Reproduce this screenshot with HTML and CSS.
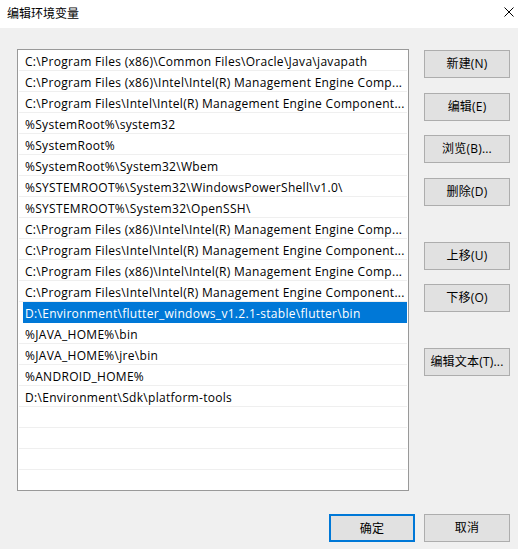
FILE: index.html
```html
<!DOCTYPE html>
<html lang="zh-CN">
<head>
<meta charset="utf-8">
<title>编辑环境变量</title>
<link rel="stylesheet" href="styles.css">
</head>
<body>
<div class="dialog">
  <div class="titlebar">
    <span class="title">编辑环境变量</span>
    <svg class="close" width="10" height="10" viewBox="0 0 10 10"><path d="M0.5 0.5 L9.5 9.5 M9.5 0.5 L0.5 9.5" stroke="#000" stroke-width="1" fill="none"/></svg>
  </div>
  <div class="content">
    <div class="main">
      <div class="list">
        <div class="row">C:\Program Files (x86)\Common Files\Oracle\Java\javapath</div>
        <div class="row">C:\Program Files (x86)\Intel\Intel(R) Management Engine Comp...</div>
        <div class="row">C:\Program Files\Intel\Intel(R) Management Engine Component...</div>
        <div class="row">%SystemRoot%\system32</div>
        <div class="row">%SystemRoot%</div>
        <div class="row">%SystemRoot%\System32\Wbem</div>
        <div class="row">%SYSTEMROOT%\System32\WindowsPowerShell\v1.0\</div>
        <div class="row">%SYSTEMROOT%\System32\OpenSSH\</div>
        <div class="row">C:\Program Files (x86)\Intel\Intel(R) Management Engine Comp...</div>
        <div class="row">C:\Program Files\Intel\Intel(R) Management Engine Component...</div>
        <div class="row">C:\Program Files (x86)\Intel\Intel(R) Management Engine Comp...</div>
        <div class="row">C:\Program Files\Intel\Intel(R) Management Engine Component...</div>
        <div class="row sel">D:\Environment\flutter_windows_v1.2.1-stable\flutter\bin</div>
        <div class="row">%JAVA_HOME%\bin</div>
        <div class="row">%JAVA_HOME%\jre\bin</div>
        <div class="row">%ANDROID_HOME%</div>
        <div class="row">D:\Environment\Sdk\platform-tools</div>
        <div class="row"></div>
        <div class="row"></div>
        <div class="row"></div>
        <div class="row last"></div>
      </div>
      <div class="side">
        <button class="btn">新建(N)</button>
        <button class="btn mt1">编辑(E)</button>
        <button class="btn">浏览(B)...</button>
        <button class="btn mt1">删除(D)</button>
        <button class="btn mtl">上移(U)</button>
        <button class="btn">下移(O)</button>
        <button class="btn mtl">编辑文本(T)...</button>
      </div>
    </div>
    <div class="footer">
      <button class="btn default">确定</button>
      <button class="btn">取消</button>
    </div>
  </div>
</div>
</body>
</html>
```
FILE: styles.css
```css
html, body {
  margin: 0;
  padding: 0;
}
body {
  width: 518px;
  height: 549px;
  background: #f0f0f0;
  font-family: "Open Sans", "Noto Sans CJK SC", sans-serif;
  font-size: 12px;
  color: #000;
  overflow: hidden;
}
.dialog {
  display: flex;
  flex-direction: column;
  height: 549px;
}
.titlebar {
  height: 28px;
  background: #fff;
  display: flex;
  align-items: center;
  justify-content: space-between;
  padding: 0 4px 0 7px;
  box-sizing: border-box;
}
.title {
  font-family: "Noto Sans CJK SC", sans-serif;
  font-size: 12px;
  line-height: 16px;
  margin-top: -2px;
  color: #000;
}
.close {
  display: block;
  margin-top: -4px;
}
.content {
  display: flex;
  flex-direction: column;
  padding: 21px 8px 0 17px;
}
.main {
  display: flex;
  align-items: flex-start;
}
.list {
  width: 392px;
  height: 442px;
  box-sizing: border-box;
  border: 1px solid #999;
  background: #fff;
  padding: 0 1px;
  display: flex;
  flex-direction: column;
  overflow: hidden;
}
.row {
  height: 21px;
  flex: none;
  box-sizing: border-box;
  border-bottom: 1px solid #efefef;
  padding: 3px 0 0 6px;
  line-height: 18px;
  white-space: nowrap;
  overflow: hidden;
  letter-spacing: 0.3px;
}
.row.last {
  border-bottom: none;
}
.row.sel {
  color: #fff;
  border-bottom-color: transparent;
  background: linear-gradient(to right, transparent 4px, #0078d7 4px);
  background-origin: border-box;
}
.side {
  display: flex;
  flex-direction: column;
  gap: 14px;
  margin-left: 15px;
  margin-top: 1px;
}
.btn {
  width: 86px;
  height: 28px;
  box-sizing: border-box;
  background: #e1e1e1;
  border: 1px solid #adadad;
  font-family: "Open Sans", "Noto Sans CJK SC", sans-serif;
  font-size: 12px;
  color: #000;
  padding: 0;
  margin: 0;
  line-height: 26px;
  letter-spacing: 0.2px;
}
.btn.mt1 {
  margin-top: 1px;
}
.btn.mtl {
  margin-top: 22px;
}
.btn.default {
  border: 2px solid #0078d7;
}
.footer {
  display: flex;
  justify-content: flex-end;
  gap: 9px;
  margin-top: 23px;
}
```
